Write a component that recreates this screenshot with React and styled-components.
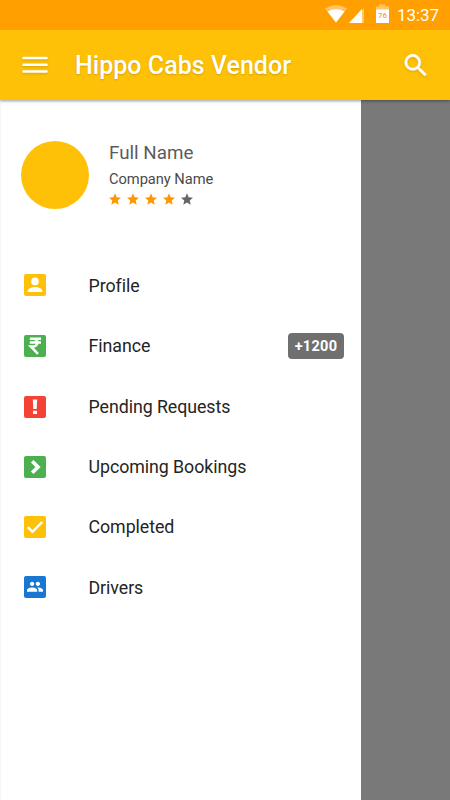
import React from "react";
import styled, { createGlobalStyle } from "styled-components";

const GlobalStyle = createGlobalStyle`
  * {
    box-sizing: border-box;
  }

  body {
    margin: 0;
    font-family: Roboto, "Liberation Sans", sans-serif;
    background-color: #fff;
  }
`;

const Screen = styled.div`
  display: flex;
  flex-direction: column;
  width: 450px;
  height: 800px;
  overflow: hidden;
`;

const StatusBar = styled.div`
  display: flex;
  justify-content: flex-end;
  align-items: center;
  height: 30px;
  padding-right: 11px;
  background-color: #ffa000;
`;

const Time = styled.span`
  width: 42px;
  margin-left: 8px;
  font-size: 17px;
  line-height: 30px;
  letter-spacing: -0.1px;
  white-space: nowrap;
  color: #fff;
`;

const Toolbar = styled.header`
  display: flex;
  align-items: center;
  height: 70px;
  padding: 0 21px 0 22px;
  background-color: #ffc107;
  box-shadow: 0 1px 3px rgba(0, 0, 0, 0.4);
  clip-path: inset(0 0 -5px 0);
  z-index: 1;

  svg {
    filter: drop-shadow(0 1px 1px rgba(0, 0, 0, 0.16));
  }
`;

const Title = styled.h1`
  flex: 1;
  margin: 0 0 0 27px;
  font-size: 25px;
  font-weight: 500;
  letter-spacing: 0.03px;
  white-space: nowrap;
  color: #fff;
  text-shadow: 0 1px 2px rgba(0, 0, 0, 0.18);
`;

const Body = styled.div`
  display: flex;
  flex: 1;
  background-color: #797979;
`;

const Drawer = styled.nav`
  width: 361px;
  background-color: #fff;
  border-left: 1px solid #f5f5f5;
`;

const Account = styled.div`
  display: flex;
  height: 155.500px;
  padding: 40px 0 0 20px;
`;

const Avatar = styled.div`
  width: 68px;
  height: 68px;
  margin-top: 0.5px;
  border-radius: 50%;
  background-color: #ffc107;
`;

const AccountInfo = styled.div`
  display: flex;
  flex-direction: column;
  margin-left: 20px;
`;

const FullName = styled.span`
  font-size: 18.8px;
  line-height: 26px;
  color: #5c5c5c;
`;

const Company = styled.span`
  font-size: 14.7px;
  line-height: 20px;
  margin-top: 3px;
  letter-spacing: -0.05px;
  color: #4a4a4a;
`;

const Rating = styled.div`
  display: flex;
  gap: 6px;
  margin-top: 4px;
`;

const Menu = styled.ul`
  margin: 0;
  padding: 0 0 0 23px;
  list-style: none;
`;

const Item = styled.li`
  display: flex;
  align-items: center;
  height: 60.3px;

  svg {
    margin-top: ${(props) => props.$shift || 0}px;
  }
`;

const Label = styled.span`
  flex: 1;
  margin-left: 42.5px;
  font-size: 17.8px;
  letter-spacing: -0.06px;
  color: #242424;
`;

const Badge = styled.span`
  width: 56px;
  height: 26px;
  margin: 1px 17px 0 0;
  border-radius: 4px;
  background-color: #6f6f6f;
  color: #fff;
  font-size: 14.5px;
  font-weight: 700;
  line-height: 27px;
  letter-spacing: 0.3px;
  text-align: center;
`;

const SignalIcons = () => (
  <svg width="64" height="30" viewBox="325 0 64 30">
    <path d="M325 8.500Q336 1.500 347 8.500L336 22.500Z" fill="#ffc566" />
    <path d="M327.500 11.500Q336 7 344.500 11.500L336 22.500Z" fill="#fff" />
    <path d="M364 8V23H349Z" fill="#ffc566" />
    <path d="M362 9V23H349Z" fill="#fff" />
    <path d="M376 10V6.500H379V4.500H385.500V6.500H389V10Z" fill="#ffc566" />
    <path d="M376 9.500H389V23H376Z" fill="#fff" />
    <text x="382.500" y="18" textAnchor="middle" fontSize="8" fontWeight="500" fill="#ff9a35">
      76
    </text>
  </svg>
);

const MenuIcon = () => (
  <svg width="26" height="18" viewBox="0 0 26 18" stroke="#fff" strokeWidth="2.600" strokeLinecap="round">
    <path d="M1.500 2H24.500M1.500 8.800H24.500M1.500 15.500H24.500" />
  </svg>
);

const SearchIcon = () => (
  <svg width="25" height="25" viewBox="2.500 2 20 20" fill="#fff" stroke="#fff" strokeWidth="0.400">
    <path d="M15.500 14h-.79l-.28-.27A6.471 6.471 0 0 0 16 9.500 6.500 6.500 0 1 0 9.500 16c1.610 0 3.090-.59 4.230-1.570l.27.28v.79l5 4.990L20.490 19l-4.990-5zm-6 0C7.010 14 5 11.990 5 9.500S7.010 5 9.500 5 14 7.010 14 9.500 11.990 14 9.500 14z" />
  </svg>
);

const Star = ({ color }) => (
  <svg width="12" height="12" viewBox="2 1.500 20 20" fill={color}>
    <path d="M12 17.270L18.180 21l-1.640-7.030L22 9.240l-7.190-.61L12 2 9.190 8.630 2 9.240l5.460 4.730L5.820 21z" />
  </svg>
);

const Tile = ({ color, children }) => (
  <svg width="22" height="22" viewBox="0 0 22 22">
    <rect width="22" height="22" rx="2" fill={color} />
    {children}
  </svg>
);

const glyphs = {
  profile: (
    <g fill="#fff">
      <circle cx="11" cy="7.400" r="3.800" />
      <path d="M3.700 18v-1.200c0-2.500 4.900-3.800 7.300-3.800s7.300 1.300 7.300 3.800V18z" />
    </g>
  ),
  rupee: (
    <path
      d="M5.800 3.700H17M5.800 7.500H17M6.200 3.700H9.500C14.500 3.700 14.500 11.500 9.500 11.500H6.800L14 18.800"
      fill="none"
      stroke="#fff"
      strokeWidth="2.500"
    />
  ),
  alert: <path d="M8.800 3.500H13.200L12.700 13H9.300ZM9 14.700H13V18H9Z" fill="#fff" />,
  arrow: <path d="M8.200 5.300L14 11L8.200 16.700" fill="none" stroke="#fff" strokeWidth="3.700" />,
  check: <path d="M3.800 11.200L8.500 15.900L18.200 6" fill="none" stroke="#fff" strokeWidth="2.400" />,
  people: (
    <g fill="#fff" transform="translate(2.300 2) scale(.725)">
      <path d="M16 11c1.660 0 2.990-1.340 2.990-3S17.660 5 16 5s-3 1.340-3 3 1.340 3 3 3zm-8 0c1.660 0 2.990-1.340 2.990-3S9.660 5 8 5 5 6.340 5 8s1.340 3 3 3zm0 2c-2.330 0-7 1.170-7 3.500V19h14v-2.500C15 14.170 10.330 13 8 13zm8 0c-.29 0-.62.02-.97.05 1.160.84 1.970 1.970 1.970 3.450V19h6v-2.500c0-2.330-4.670-3.500-7-3.500z" />
    </g>
  ),
};

const items = [
  { label: "Profile", color: "#ffc107", glyph: "profile", shift: -1 },
  { label: "Finance", color: "#4caf50", glyph: "rupee", badge: "+1200" },
  { label: "Pending Requests", color: "#f44336", glyph: "alert", shift: 1 },
  { label: "Upcoming Bookings", color: "#4caf50", glyph: "arrow", shift: 1 },
  { label: "Completed", color: "#ffc107", glyph: "check" },
  { label: "Drivers", color: "#1976d2", glyph: "people", shift: -1 },
];

const App = () => {
  return (
    <Screen>
      <GlobalStyle />
      <StatusBar>
        <SignalIcons />
        <Time>13:37</Time>
      </StatusBar>
      <Toolbar>
        <MenuIcon />
        <Title>Hippo Cabs Vendor</Title>
        <SearchIcon />
      </Toolbar>
      <Body>
        <Drawer>
          <Account>
            <Avatar />
            <AccountInfo>
              <FullName>Full Name</FullName>
              <Company>Company Name</Company>
              <Rating>
                {[1, 2, 3, 4, 5].map((n) => (
                  <Star key={n} color={n < 5 ? "#ff9800" : "#666"} />
                ))}
              </Rating>
            </AccountInfo>
          </Account>
          <Menu>
            {items.map((item) => (
              <Item key={item.label} $shift={item.shift}>
                <Tile color={item.color}>{glyphs[item.glyph]}</Tile>
                <Label>{item.label}</Label>
                {item.badge && <Badge>{item.badge}</Badge>}
              </Item>
            ))}
          </Menu>
        </Drawer>
      </Body>
    </Screen>
  );
};

export default App;
